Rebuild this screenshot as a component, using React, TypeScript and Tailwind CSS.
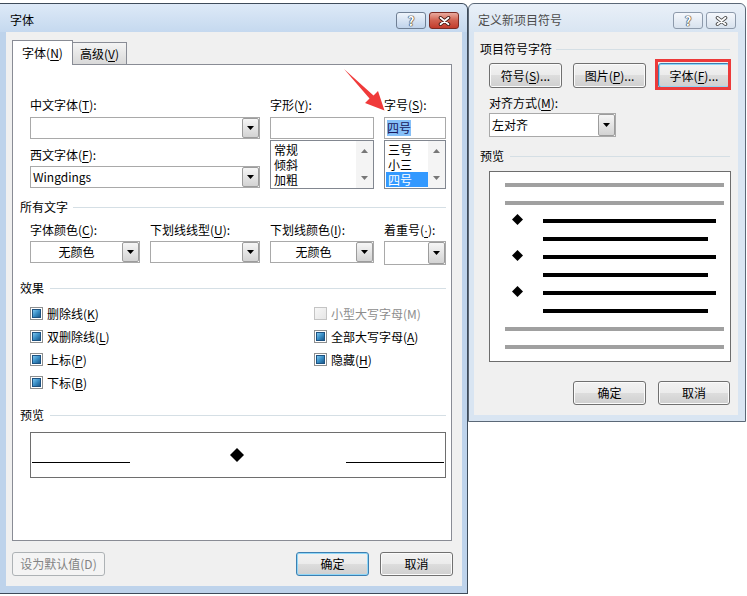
import React from 'react';
import clsx from 'clsx';

function U({ children }: { children: React.ReactNode }) {
  return <span className="underline underline-offset-[2px]">{children}</span>;
}

function DropButton() {
  return (
    <div className="flex h-full w-[17px] shrink-0 items-center justify-center rounded-[2px] border border-[#9c9c9c] bg-gradient-to-b from-[#f6f6f6] to-[#d3d3d3]">
      <svg width="7" height="4" viewBox="0 0 7 4">
        <path d="M0 0h7L3.5 4z" fill="#000" />
      </svg>
    </div>
  );
}

function Combo({ className, text, center }: { className: string; text?: string; center?: boolean }) {
  return (
    <div className={clsx('flex h-[22px] border border-[#a9a9a9] bg-white', className)}>
      <div className={clsx('flex flex-1 items-center px-[2px]', center && 'justify-center')}>{text}</div>
      <DropButton />
    </div>
  );
}

function Btn({
  className,
  children,
  focused,
  disabled,
}: {
  className: string;
  children: React.ReactNode;
  focused?: boolean;
  disabled?: boolean;
}) {
  return (
    <div
      className={clsx(
        'flex h-[24px] items-center justify-center rounded-[3px] border',
        disabled
          ? 'border-[#adb2b5] bg-[#f4f4f4] text-[#838383]'
          : 'bg-[linear-gradient(#f2f2f2_0%,#ebebeb_50%,#dddddd_50%,#cfcfcf_100%)]',
        !disabled && (focused ? 'border-[#3c7fb1] shadow-[inset_0_0_0_1px_#8fd6f7]' : 'border-[#707070] shadow-[inset_0_0_0_1px_#fbfbfb]'),
        className
      )}
    >
      {children}
    </div>
  );
}

function Check({ off }: { off?: boolean }) {
  if (off) return <span className="flex h-[13px] w-[13px] shrink-0 border border-[#c4c4c4] bg-gradient-to-br from-[#f7f7f7] to-[#e6e6e6]" />;
  return (
    <span className="flex h-[13px] w-[13px] shrink-0 border border-[#8e8f8f] bg-white p-[1px]">
      <span className="flex-1 border border-[#1d5281] bg-gradient-to-br from-[#7cc6ee] via-[#3a8fc6] to-[#1b5a8c]" />
    </span>
  );
}

function Section({ title, gap }: { title: string; gap: string }) {
  return (
    <div className="flex h-[16px] items-center">
      <span>{title}</span>
      <span className={clsx('h-px flex-1 bg-[#d5dfe5]', gap)} />
    </div>
  );
}

function HelpBtn({ active }: { active?: boolean }) {
  return (
    <div
      className={clsx(
        'flex h-[17px] w-[30px] items-center justify-center rounded-[3px] border',
        active ? 'border-[#6f7f94] bg-gradient-to-b from-[#eef4fb] to-[#c0d3eb]' : 'border-[#8d9aab] bg-gradient-to-b from-[#f5f8fc] to-[#d8e2ee]'
      )}
    >
      <span className="text-[13px] font-bold leading-none text-white [text-shadow:0_0_1px_#222,0_0_1px_#222,0_0_1px_#222]">?</span>
    </div>
  );
}

function CloseBtn({ active }: { active?: boolean }) {
  return (
    <div
      className={clsx(
        'flex h-[17px] w-[30px] items-center justify-center rounded-[3px] border',
        active ? 'border-[#7a2b24] bg-gradient-to-b from-[#e9aa9e] via-[#d0604f] to-[#c23a2b]' : 'border-[#8d9aab] bg-gradient-to-b from-[#f5f8fc] to-[#d8e2ee]'
      )}
    >
      <svg width="13" height="10" viewBox="0 0 13 10">
        <path d="M2.5 1.8l8 6.4M10.5 1.8l-8 6.4" stroke={active ? '#3a1410' : '#4a4a4a'} strokeWidth="3.6" strokeLinecap="round" />
        <path d="M2.5 1.8l8 6.4M10.5 1.8l-8 6.4" stroke="#fff" strokeWidth="1.8" strokeLinecap="round" />
      </svg>
    </div>
  );
}

function ListBox({ items, selected }: { items: string[]; selected?: number }) {
  return (
    <div className="mt-[1px] flex h-[49px] border border-[#828790] bg-white">
      <div className="flex-1 pt-[1px] pl-[1px]">
        {items.map((it, i) => (
          <div
            key={it}
            className={clsx('h-[15px] overflow-hidden pl-[2px] text-[12px] leading-[15px]', i === selected && 'bg-[#3399ff] text-white')}
          >
            {it}
          </div>
        ))}
      </div>
      <div className="flex w-[17px] flex-col items-center justify-between bg-[#f4f4f4] py-[8px]">
        <svg width="7" height="4" viewBox="0 0 7 4">
          <path d="M0 4h7L3.5 0z" fill="#777" />
        </svg>
        <svg width="7" height="4" viewBox="0 0 7 4">
          <path d="M0 0h7L3.5 4z" fill="#777" />
        </svg>
      </div>
    </div>
  );
}

function FontDialog() {
  const effectsLeft = [
    <>删除线(<U>K</U>)</>,
    <>双删除线(<U>L</U>)</>,
    <>上标(<U>P</U>)</>,
    <>下标(<U>B</U>)</>,
  ];
  return (
    <div className="flex h-[591px] w-[468px] shrink-0 flex-col rounded-tr-[6px] border border-l-0 border-[#3e4b5a] bg-[#bed3eb]">
      <div className="flex h-[28px] justify-between rounded-tr-[6px] bg-gradient-to-b from-[#dde9f7] to-[#c5d9ef] pl-[10px] pr-[8px]">
        <span className="mt-[8px]">字体</span>
        <div className="mt-[8px] flex gap-[3px]">
          <HelpBtn active />
          <CloseBtn active />
        </div>
      </div>
      <div className="ml-[6px] mr-[5px] flex h-[554px] flex-col bg-[#f0f0f0] px-[6px] pt-[8px]">
        <div className="flex h-[24px] items-end">
          <div className="relative z-10 -mb-px flex h-[25px] w-[61px] items-center justify-center border border-b-0 border-[#898c95] bg-white">
            字体(<U>N</U>)
          </div>
          <div className="flex h-[22px] w-[54px] items-center justify-center border border-b-0 border-l-0 border-[#898c95] bg-gradient-to-b from-[#f4f4f4] to-[#d9d9d9]">
            高级(<U>V</U>)
          </div>
        </div>
        <div className="mr-[4px] flex h-[477px] flex-col border border-[#898c95] bg-white pl-[7px] pr-[5px] pt-[32px]">
          <div className="flex gap-[10px] pl-[10px]">
            <div className="w-[230px]">
              <div className="mb-[4px] h-[16px]">中文字体(<U>T</U>):</div>
              <Combo className="w-[230px]" />
              <div className="mb-[3px] mt-[8px] h-[16px]">西文字体(<U>F</U>):</div>
              <Combo className="w-[230px]" text="Wingdings" />
            </div>
            <div className="w-[104px]">
              <div className="mb-[4px] h-[16px]">字形(<U>Y</U>):</div>
              <div className="h-[22px] border border-[#a9a9a9] bg-white" />
              <ListBox items={['常规', '倾斜', '加粗']} />
            </div>
            <div className="w-[62px]">
              <div className="mb-[4px] h-[16px]">字号(<U>S</U>):</div>
              <div className="flex h-[22px] items-center border border-[#a9a9a9] bg-white px-[2px]">
                <span className="bg-[#86c0f8] text-[#16165a]">四号</span>
              </div>
              <ListBox items={['三号', '小三', '四号']} selected={2} />
            </div>
          </div>

          <div className="mt-[10px]">
            <Section title="所有文字" gap="ml-[5px]" />
          </div>
          <div className="mt-[7px] flex gap-[10px] pl-[10px]">
            <div className="w-[110px]">
              <div className="mb-[3px] h-[16px]">字体颜色(<U>C</U>):</div>
              <Combo className="w-[110px]" text="无颜色" center />
            </div>
            <div className="w-[110px]">
              <div className="mb-[3px] h-[16px]">下划线线型(<U>U</U>):</div>
              <Combo className="w-[110px]" />
            </div>
            <div className="w-[104px]">
              <div className="mb-[3px] h-[16px]">下划线颜色(<U>I</U>):</div>
              <Combo className="w-[104px]" text="无颜色" center />
            </div>
            <div className="w-[62px]">
              <div className="mb-[3px] h-[16px]">
                着重号(<U><span className="font-['Liberation_Sans',sans-serif]">·</span></U>):
              </div>
              <Combo className="h-[24px] w-[62px]" />
            </div>
          </div>

          <div className="mt-[15px]">
            <Section title="效果" gap="ml-[6px]" />
          </div>
          <div className="mt-[6px] flex pl-[10px]">
            <div className="w-[284px]">
              {effectsLeft.map((t, i) => (
                <div key={i} className="flex h-[23px] items-center gap-[4px]">
                  <Check />
                  <span>{t}</span>
                </div>
              ))}
            </div>
            <div>
              <div className="flex h-[23px] items-center gap-[4px] text-[#8d8d8d]">
                <Check off />
                <span>小型大写字母(M)</span>
              </div>
              <div className="flex h-[23px] items-center gap-[4px]">
                <Check />
                <span>全部大写字母(<U>A</U>)</span>
              </div>
              <div className="flex h-[23px] items-center gap-[4px]">
                <Check />
                <span>隐藏(<U>H</U>)</span>
              </div>
            </div>
          </div>

          <div className="mt-[13px]">
            <Section title="预览" gap="ml-[6px]" />
          </div>
          <div className="ml-[10px] mt-[9px] h-[46px] w-[416px] border border-[#6e6e6e] bg-white">
            <svg width="414" height="44" className="block">
              <line x1="1" y1="29.5" x2="99" y2="29.5" stroke="#000" />
              <path d="M206 15l7 7-7 7-7-7z" fill="#000" />
              <line x1="315" y1="29.5" x2="413" y2="29.5" stroke="#000" />
            </svg>
          </div>
        </div>
        <div className="mt-[11px] flex pr-[3px]">
          <Btn className="w-[93px]" disabled>
            设为默认值(D)
          </Btn>
          <div className="ml-auto flex gap-[11px]">
            <Btn className="w-[73px]" focused>
              确定
            </Btn>
            <Btn className="w-[73px]">取消</Btn>
          </div>
        </div>
      </div>
    </div>
  );
}

function Diamond() {
  return (
    <svg className="mb-[4px] ml-[22px] shrink-0" width="11" height="11" viewBox="0 0 11 11">
      <path d="M5.5 0L11 5.5 5.5 11 0 5.5z" fill="#000" />
    </svg>
  );
}

function BulletDialog() {
  const grayLine = <div className="ml-[15px] h-[4px] w-[219px] bg-[#a0a0a0]" />;
  const bulletRow = (
    <div className="flex h-[4px] items-center">
      <Diamond />
      <div className="ml-[20px] h-[4px] w-[173px] bg-black" />
    </div>
  );
  const shortLine = <div className="ml-[53px] h-[4px] w-[165px] bg-black" />;
  return (
    <div className="flex h-[419px] w-[278px] shrink-0 flex-col rounded-t-[6px] border border-[#5b6877] bg-[#d9e5f2]">
      <div className="flex h-[28px] justify-between rounded-t-[6px] bg-gradient-to-b from-[#e9f0f8] to-[#d9e5f2] pl-[9px] pr-[9px]">
        <span className="mt-[8px] text-[#4c4c4c]">定义新项目符号</span>
        <div className="mt-[8px] flex gap-[3px]">
          <HelpBtn />
          <CloseBtn />
        </div>
      </div>
      <div className="ml-[5px] flex h-[383px] w-[264px] flex-col bg-[#f0f0f0] pl-[6px] pr-[8px] pt-[9px]">
        <Section title="项目符号字符" gap="ml-[4px]" />
        <div className="ml-[9px] mt-[6px] flex">
          <Btn className="h-[25px] w-[73px]">
            符号(<U>S</U>)...
          </Btn>
          <Btn className="ml-[11px] h-[25px] w-[73px]">
            图片(<U>P</U>)...
          </Btn>
          <div className="relative ml-[12px]">
            <Btn className="h-[25px] w-[72px]" focused>
              字体(<U>F</U>)...
            </Btn>
            <div className="pointer-events-none absolute -bottom-[2px] -left-[3px] -right-[1px] -top-[4px] border-[3px] border-[#ec3a3a]" />
          </div>
        </div>
        <div className="ml-[9px] mt-[7px] h-[16px]">对齐方式(<U>M</U>):</div>
        <Combo className="ml-[9px] mt-[2px] h-[24px] w-[127px]" text="左对齐" />
        <div className="mt-[11px]">
          <Section title="预览" gap="ml-[6px]" />
        </div>
        <div className="ml-[9px] mt-[7px] flex h-[191px] w-[242px] flex-col gap-[14px] border border-[#6d6d6d] bg-white pt-[11px]">
          {grayLine}
          {grayLine}
          {bulletRow}
          {shortLine}
          {bulletRow}
          {shortLine}
          {bulletRow}
          {shortLine}
          {grayLine}
          {grayLine}
        </div>
        <div className="mt-[19px] flex justify-end gap-[12px]">
          <Btn className="w-[73px]">确定</Btn>
          <Btn className="w-[72px]">取消</Btn>
        </div>
      </div>
    </div>
  );
}

export default function App() {
  return (
    <div className="relative h-[596px] w-[747px] overflow-hidden bg-white pt-[3px] font-['Noto_Sans_CJK_SC',sans-serif] text-[12px] leading-[16px] text-black">
      <div className="flex items-start">
        <FontDialog />
        <BulletDialog />
      </div>
      {/* red annotation arrow */}
      <svg className="pointer-events-none absolute left-0 top-0" width="747" height="596">
        <path d="M344 69L373.5 95.5 378 91 384.5 110.5 365 103 369.5 98.5z" fill="#f03a3a" />
      </svg>
    </div>
  );
}
